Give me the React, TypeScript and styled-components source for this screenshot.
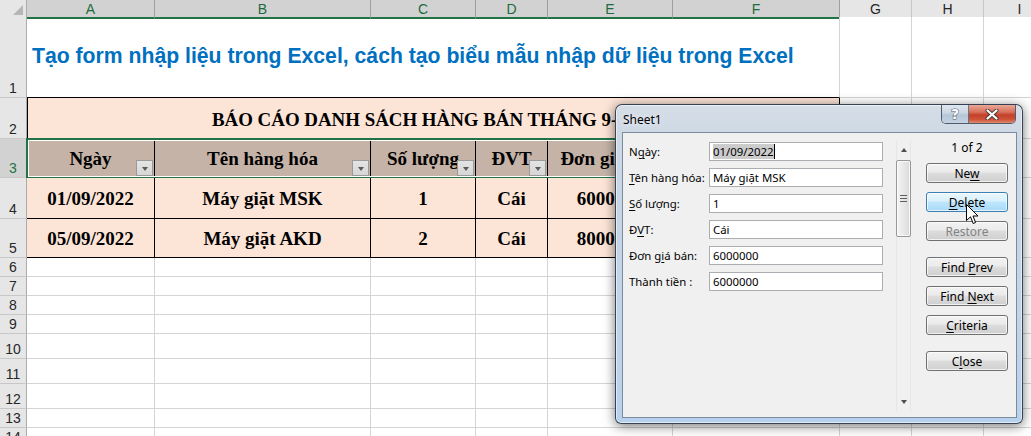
import React from "react";
import styled, { createGlobalStyle } from "styled-components";

const GlobalStyle = createGlobalStyle`
  html, body { margin: 0; padding: 0; background: #fff; overflow: hidden; }
  #root { position: relative; width: 1031px; height: 436px; overflow: hidden; }
`;

const GREEN = "#217346";
const PEACH = "#fce4d6";
const HEAD = "#c5b3a7";
const GRID = "#d4d4d4";

const Sheet = styled.div`
  display: flex;
  flex-direction: column;
  width: 1056px;
  font-family: "Liberation Sans", Arial, sans-serif;
`;

const Row = styled.div<{ $h: number }>`
  position: relative;
  display: grid;
  grid-template-columns: 27px 128px 216px 105px 72px 125px 167px 72px 72px 72px;
  height: ${(p) => p.$h}px;
`;

const Corner = styled.div`
  display: flex;
  justify-content: flex-end;
  align-items: flex-end;
  padding: 0 3px 3px 0;
  background: #e6e6e6;
  border-right: 1px solid #ababab;
  border-bottom: 1px solid #ababab;
  box-sizing: border-box;
  &::after {
    content: "";
    width: 0;
    height: 0;
    border-left: 10px solid transparent;
    border-bottom: 10px solid #b6b6b6;
  }
`;

const ColHead = styled.div<{ $sel?: boolean }>`
  display: flex;
  align-items: center;
  justify-content: center;
  box-sizing: border-box;
  font-size: 14px;
  background: ${(p) => (p.$sel ? "#d2d2d2" : "#e6e6e6")};
  color: ${(p) => (p.$sel ? "#1d6b3e" : "#262626")};
  border-right: 1px solid ${(p) => (p.$sel ? "#9e9e9e" : "#c6c6c6")};
  border-bottom: ${(p) => (p.$sel ? `2px solid ${GREEN}` : "1px solid #ababab")};
  padding-top: ${(p) => (p.$sel ? "1px" : "0")};
`;

const RowHead = styled.div<{ $sel?: boolean }>`
  display: flex;
  align-items: flex-end;
  justify-content: center;
  box-sizing: border-box;
  font-size: 14px;
  line-height: 15px;
  padding-bottom: 1px;
  background: ${(p) => (p.$sel ? "#d2d2d2" : "#e6e6e6")};
  color: ${(p) => (p.$sel ? GREEN : "#262626")};
  border-right: 1px solid #ababab;
  border-bottom: 1px solid #c8c8c8;
`;

const Cell = styled.div`
  box-sizing: border-box;
  background: #fff;
  border-right: 1px solid ${GRID};
  border-bottom: 1px solid ${GRID};
`;

const TitleCell = styled.div`
  grid-column: span 6;
  display: flex;
  align-items: center;
  box-sizing: border-box;
  padding: 0 0 2px 5px;
  border-bottom: 1px solid #000;
  border-right: 1px solid ${GRID};
  font-family: "Liberation Sans", Arial, sans-serif;
  font-weight: bold;
  font-size: 21.2px;
  color: #0070c0;
  white-space: nowrap;
`;

const ReportCell = styled.div`
  grid-column: span 6;
  display: flex;
  align-items: center;
  justify-content: center;
  box-sizing: border-box;
  background: ${PEACH};
  border-right: 1px solid #000;
  border-left: 1px solid #000;
  font-family: "Liberation Serif", "Times New Roman", serif;
  font-weight: bold;
  font-size: 18.9px;
  color: #000;
  white-space: nowrap;
  padding-top: 2px;
`;

const TableCell = styled.div<{ $head?: boolean }>`
  display: grid;
  box-sizing: border-box;
  background: ${(p) => (p.$head ? HEAD : PEACH)};
  border-right: 1px solid #000;
  border-bottom: 1px solid #000;
  font-family: "Liberation Serif", "Times New Roman", serif;
  font-weight: bold;
  font-size: 19px;
  color: #000;
  white-space: nowrap;
  overflow: hidden;
`;

const CellText = styled.span`
  grid-area: 1 / 1;
  align-self: center;
  justify-self: center;
  padding-top: 2px;
`;

const FilterBtn = styled.span`
  grid-area: 1 / 1;
  align-self: end;
  justify-self: end;
  width: 17px;
  height: 16px;
  margin: 0 1px 1px 0;
  box-sizing: border-box;
  border: 1px solid #9a9a9a;
  background: linear-gradient(#e4e4e4, #d6d6d6);
  display: flex;
  align-items: center;
  justify-content: center;
  padding-top: 2px;
  &::after {
    content: "";
    border-left: 3.5px solid transparent;
    border-right: 3.5px solid transparent;
    border-top: 4px solid #5a5a5a;
  }
`;

const Selection = styled.div`
  position: absolute;
  left: 26px;
  top: -1px;
  width: 815px;
  height: 41px;
  box-sizing: border-box;
  border: 2px solid ${GREEN};
  box-shadow: inset 0 0 0 1px #fff;
  pointer-events: none;
`;

/* ---------- Dialog ---------- */

const Dialog = styled.div`
  position: absolute;
  left: 615px;
  top: 104px;
  width: 408px;
  height: 320px;
  box-sizing: border-box;
  display: flex;
  flex-direction: column;
  padding: 0 5px 5px 6px;
  border: 1px solid rgba(30, 40, 55, 0.85);
  border-radius: 7px 7px 6px 6px;
  background: linear-gradient(180deg, #d5dde6 0%, #ccd8e5 12%, #c1d4e9 60%, #b7d2ee 100%);
  box-shadow: 0 2px 12px rgba(0, 0, 0, 0.55), inset 0 0 0 1px rgba(255, 255, 255, 0.55);
  font-family: "Noto Sans", "Open Sans", sans-serif;
  font-size: 11.4px;
  color: #000;
`;

const TitleBar = styled.div`
  height: 27px;
  display: flex;
  justify-content: space-between;
  align-items: flex-start;
`;

const Title = styled.span`
  padding: 6px 0 0 1px;
  font-size: 12px;
  color: #000;
  text-shadow: 0 0 6px rgba(255, 255, 255, 0.9);
`;

const CaptionButtons = styled.div`
  display: flex;
  margin-right: 1px;
  border: 1px solid rgba(40, 50, 65, 0.75);
  border-top: none;
  border-radius: 0 0 5px 5px;
  overflow: hidden;
  height: 19px;
  box-sizing: border-box;
`;

const HelpBtn = styled.div`
  width: 26px;
  display: flex;
  align-items: center;
  justify-content: center;
  background: linear-gradient(180deg, #dfe7ef 0%, #c9d6e3 45%, #b5c6d8 55%, #c4d3e2 100%);
  border-right: 1px solid rgba(40, 50, 65, 0.6);
  font-family: "DejaVu Sans", sans-serif;
  font-weight: bold;
  font-size: 14px;
  color: #fff;
  -webkit-text-stroke: 1px #4d5866;
  paint-order: stroke fill;
`;

const CloseBtn = styled.div`
  width: 46px;
  display: flex;
  align-items: center;
  justify-content: center;
  background: linear-gradient(180deg, #eaa898 0%, #d86e59 40%, #c3412a 55%, #cf5238 80%, #e08a6e 100%);
`;

const Client = styled.div`
  flex: 1;
  display: flex;
  align-items: flex-start;
  box-sizing: border-box;
  padding: 9px 0 0 6px;
  border: 1px solid #7c8a9b;
  background: #f0f0f0;
`;

const Fields = styled.div`
  display: grid;
  grid-template-columns: 80px 174px;
  grid-auto-rows: 19px;
  row-gap: 7px;
  align-items: center;
`;

const Label = styled.span`
  white-space: nowrap;
  u { text-decoration-thickness: 1px; text-underline-offset: 2px; }
`;

const Input = styled.div`
  height: 19px;
  box-sizing: border-box;
  border: 1px solid #abadb3;
  background: #fff;
  display: flex;
  align-items: center;
  padding-left: 3px;
  white-space: nowrap;
`;

const Selected = styled.span`
  background: #cccccc;
  border-right: 1px solid #000;
  line-height: 15px;
`;

const ScrollTrack = styled.div`
  margin: -1px 0 0 13px;
  width: 15px;
  height: 270px;
  box-sizing: border-box;
  display: flex;
  flex-direction: column;
  align-items: center;
  background: #f0f0f0;
  border-left: 1px solid #e6e6e6;
  border-right: 1px solid #e6e6e6;
`;

const Arrow = styled.div<{ $down?: boolean }>`
  height: 18px;
  width: 100%;
  display: flex;
  align-items: center;
  justify-content: center;
  &::after {
    content: "";
    border-left: 3.5px solid transparent;
    border-right: 3.5px solid transparent;
    ${(p) => (p.$down ? "border-top: 4px solid #4d4d4d;" : "border-bottom: 4px solid #4d4d4d;")}
  }
`;

const Thumb = styled.div`
  width: 15px;
  height: 77px;
  box-sizing: border-box;
  border: 1px solid #979797;
  border-radius: 2px;
  background: linear-gradient(90deg, #f4f4f4 0%, #e8e8e8 50%, #d9d9d9 100%);
  box-shadow: inset 0 0 0 1px rgba(255, 255, 255, 0.8);
  display: flex;
  flex-direction: column;
  align-items: center;
  justify-content: center;
  gap: 2px;
  margin-top: 1px;
`;

const Grip = styled.span`
  width: 7px;
  height: 1px;
  background: #5e5e5e;
`;

const TrackFill = styled.div`
  flex: 1;
`;

const ButtonCol = styled.div`
  position: relative;
  margin-left: 15px;
  width: 82px;
  display: flex;
  flex-direction: column;
`;

const Counter = styled.div`
  height: 14px;
  line-height: 14px;
  margin-top: -1px;
  margin-bottom: 8px;
  text-align: center;
  font-size: 12px;
`;

const Button = styled.div<{ $hover?: boolean; $disabled?: boolean; $gap?: number }>`
  height: 20px;
  box-sizing: border-box;
  margin-top: ${(p) => p.$gap ?? 0}px;
  border: 1px solid ${(p) => (p.$hover ? "#3c7fb1" : "#707070")};
  border-radius: 3px;
  display: flex;
  align-items: center;
  justify-content: center;
  font-size: 12px;
  color: ${(p) => (p.$disabled ? "#838383" : "#000")};
  background: ${(p) =>
    p.$hover
      ? "linear-gradient(180deg, #eaf6fd 0%, #d9f0fc 45%, #bee6fd 50%, #a7d9f5 100%)"
      : "linear-gradient(180deg, #f2f2f2 0%, #ebebeb 45%, #dddddd 50%, #cfcfcf 100%)"};
  box-shadow: inset 0 0 0 1px rgba(255, 255, 255, 0.7);
  u { text-decoration-thickness: 1px; text-underline-offset: 2px; }
`;

const Pointer = styled.svg`
  position: absolute;
  left: 40px;
  top: 62px;
`;

const cols = [
  { l: "A", sel: true },
  { l: "B", sel: true },
  { l: "C", sel: true },
  { l: "D", sel: true },
  { l: "E", sel: true },
  { l: "F", sel: true },
  { l: "G" },
  { l: "H" },
  { l: "I" },
];

const headers = ["Ngày", "Tên hàng hóa", "Số lượng", "ĐVT", "Đơn giá bán", "Thành tiền"];
const data = [
  ["01/09/2022", "Máy giặt MSK", "1", "Cái", "6000000", "6000000"],
  ["05/09/2022", "Máy giặt AKD", "2", "Cái", "8000000", "16000000"],
];

const emptyRows: [string, number][] = [
  ["6", 19],
  ["7", 19],
  ["8", 19],
  ["9", 19],
  ["10", 25],
  ["11", 25],
  ["12", 25],
  ["13", 19],
  ["14", 19],
];

const Blank = ({ n }: { n: number }) => (
  <>
    {Array.from({ length: n }).map((_, i) => (
      <Cell key={i} />
    ))}
  </>
);

export default function App() {
  return (
    <>
      <GlobalStyle />
      <Sheet>
        <Row $h={17}>
          <Corner />
          {cols.map((c) => (
            <ColHead key={c.l} $sel={c.sel}>
              {c.l}
            </ColHead>
          ))}
        </Row>
        <Row $h={81}>
          <RowHead>1</RowHead>
          <TitleCell>Tạo form nhập liệu trong Excel, cách tạo biểu mẫu nhập dữ liệu trong Excel</TitleCell>
          <Blank n={3} />
        </Row>
        <Row $h={41}>
          <RowHead>2</RowHead>
          <ReportCell>BÁO CÁO DANH SÁCH HÀNG BÁN THÁNG 9-2022</ReportCell>
          <Blank n={3} />
        </Row>
        <Row $h={39}>
          <RowHead $sel>3</RowHead>
          {headers.map((h) => (
            <TableCell key={h} $head>
              <CellText>{h}</CellText>
              <FilterBtn />
            </TableCell>
          ))}
          <Blank n={3} />
          <Selection />
        </Row>
        {data.map((r, i) => (
          <Row key={i} $h={i === 0 ? 41 : 39}>
            <RowHead>{i + 4}</RowHead>
            {r.map((v, j) => (
              <TableCell key={j}>
                <CellText>{v}</CellText>
              </TableCell>
            ))}
            <Blank n={3} />
          </Row>
        ))}
        {emptyRows.map(([n, h]) => (
          <Row key={n} $h={h}>
            <RowHead>{n}</RowHead>
            <Blank n={9} />
          </Row>
        ))}
      </Sheet>

      <Dialog>
        <TitleBar>
          <Title>Sheet1</Title>
          <CaptionButtons>
            <HelpBtn>?</HelpBtn>
            <CloseBtn>
              <svg width="14" height="11" viewBox="0 0 14 11">
                <path d="M2.5 1.5 L11.5 9.5 M11.5 1.5 L2.5 9.5" stroke="#4a3a38" strokeWidth="4" strokeLinecap="round" fill="none" />
                <path d="M2.5 1.5 L11.5 9.5 M11.5 1.5 L2.5 9.5" stroke="#fff" strokeWidth="2.2" strokeLinecap="round" fill="none" />
              </svg>
            </CloseBtn>
          </CaptionButtons>
        </TitleBar>
        <Client>
          <Fields>
            <Label>
              N<u>g</u>ày:
            </Label>
            <Input>
              <Selected>01/09/2022</Selected>
            </Input>
            <Label>
              <u>T</u>ên hàng hóa:
            </Label>
            <Input>Máy giặt MSK</Input>
            <Label>
              <u>S</u>ố lượng:
            </Label>
            <Input>1</Input>
            <Label>
              Đ<u>V</u>T:
            </Label>
            <Input>Cái</Input>
            <Label>
              Đơn g<u>i</u>á bán:
            </Label>
            <Input>6000000</Input>
            <Label>Thành tiền :</Label>
            <Input>6000000</Input>
          </Fields>
          <ScrollTrack>
            <Arrow />
            <Thumb>
              <Grip />
              <Grip />
              <Grip />
            </Thumb>
            <TrackFill />
            <Arrow $down />
          </ScrollTrack>
          <ButtonCol>
            <Counter>1 of 2</Counter>
            <Button>
              <span>
                Ne<u>w</u>
              </span>
            </Button>
            <Button $hover $gap={9}>
              <span>
                <u>D</u>elete
              </span>
            </Button>
            <Button $disabled $gap={9}>
              <span>Restore</span>
            </Button>
            <Button $gap={16}>
              <span>
                Find <u>P</u>rev
              </span>
            </Button>
            <Button $gap={9}>
              <span>
                Find <u>N</u>ext
              </span>
            </Button>
            <Button $gap={9}>
              <span>
                <u>C</u>riteria
              </span>
            </Button>
            <Button $gap={16}>
              <span>
                C<u>l</u>ose
              </span>
            </Button>
            <Pointer width="13" height="21" viewBox="0 0 13 21">
              <path
                d="M0.5 0.5 L0.5 16.5 L4.5 12.8 L7.2 19.5 L9.6 18.5 L7 12 L12 12 Z"
                fill="#fff"
                stroke="#000"
                strokeWidth="1"
                strokeLinejoin="miter"
              />
            </Pointer>
          </ButtonCol>
        </Client>
      </Dialog>
    </>
  );
}
